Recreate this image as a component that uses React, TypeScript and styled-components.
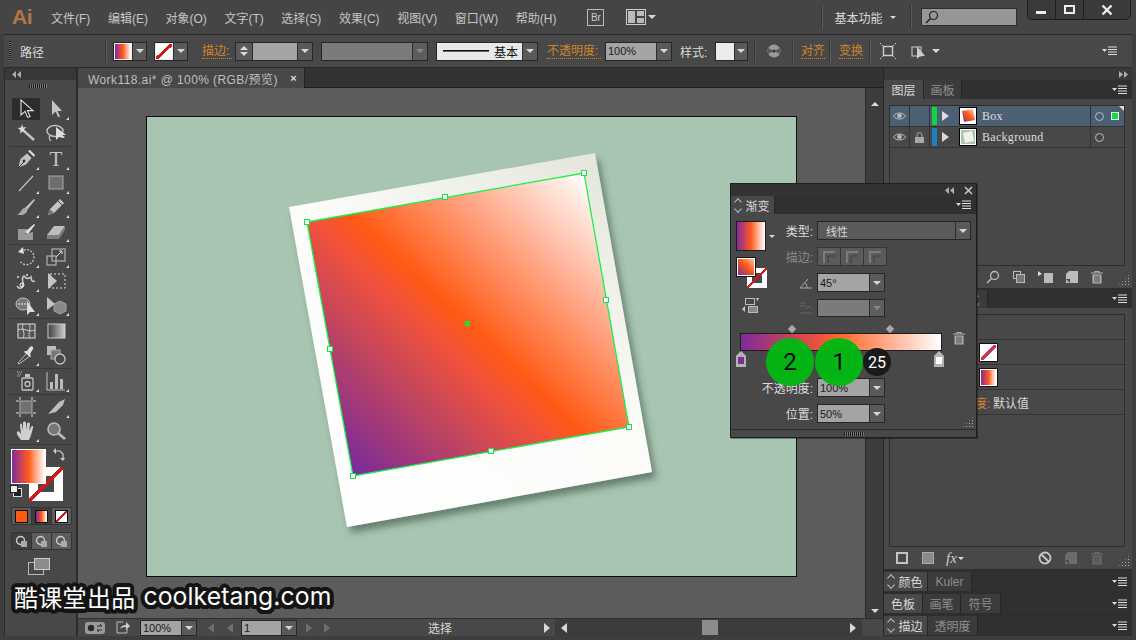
import React from 'react';
import styled, { createGlobalStyle, css } from 'styled-components';

const UI_FONT = '"Liberation Sans", "Noto Sans CJK SC", sans-serif';
const GRAD = 'linear-gradient(90deg, #7b2d9c 0%, #c0405e 25%, #f0503a 42%, #ff5a14 50%, #ffa888 72%, #ffffff 100%)';
const NONE = (c: string) => `linear-gradient(to bottom right, #fff 43%, ${c} 43%, ${c} 57%, #fff 57%)`;
const ORANGE = '#d08428';

const GlobalStyle = createGlobalStyle`
  html, body { margin: 0; padding: 0; background: #2c2c2c; }
  * { box-sizing: border-box; }
`;

const offset = css<{ $ml?: number }>`
  margin-left: ${p => p.$ml ?? 0}px;
  flex: none;
`;

const Window = styled.div`
  position: relative;
  width: 1136px;
  height: 640px;
  overflow: hidden;
  display: flex;
  flex-direction: column;
  background: #3e3e3e;
  font-family: ${UI_FONT};
  font-size: 12px;
  color: #d4d4d4;
`;

/* ---------- menu bar ---------- */
const MenuBar = styled.div`
  height: 34px;
  display: flex;
  align-items: center;
  background: #454545;
  flex: none;
`;

const Logo = styled.div`
  margin-left: 12px;
  width: 39px;
  font: bold 21px "Liberation Sans", sans-serif;
  color: #b4764a;
  letter-spacing: -0.5px;
`;

const MenuItems = styled.div`
  display: flex;
  gap: 17.6px;
  color: #c6c6c6;
`;

const BrBox = styled.div<{ $ml?: number }>`
  ${offset}
  width: 17px;
  height: 17px;
  border: 1px solid #bbb;
  font-size: 10px;
  line-height: 15px;
  text-align: center;
  color: #ccc;
`;

const Icon = styled.svg<{ $ml?: number }>`
  ${offset}
  display: block;
`;

const Caret = styled.span<{ $ml?: number; $color?: string; $size?: number }>`
  ${offset}
  display: block;
  width: 0;
  height: 0;
  border-left: ${p => p.$size ?? 4}px solid transparent;
  border-right: ${p => p.$size ?? 4}px solid transparent;
  border-top: ${p => p.$size ?? 4}px solid ${p => p.$color ?? '#d8d8d8'};
`;

const BarSep = styled.div<{ $ml?: number; $h?: number }>`
  ${offset}
  width: 1px;
  height: ${p => p.$h ?? 24}px;
  background: #5a5a5a;
  box-shadow: -1px 0 0 #383838;
`;

const Label = styled.div<{ $ml?: number; $w?: number; $accent?: boolean }>`
  ${offset}
  width: ${p => (p.$w ? `${p.$w}px` : 'auto')};
  white-space: nowrap;
  color: ${p => (p.$accent ? ORANGE : '#d8d8d8')};
  ${p => p.$accent && `border-bottom: 1px dotted ${ORANGE}; line-height: 14px;`}
`;

const SearchField = styled.div<{ $ml?: number }>`
  ${offset}
  width: 96px;
  height: 18px;
  background: #969696;
  border: 1px solid #2e2e2e;
  padding: 1px 3px;
`;

const WindowButtons = styled.div<{ $ml?: number }>`
  ${offset}
  align-self: flex-start;
  display: flex;
  height: 20px;
  background: #3a3a3a;
  border: 1px solid #1f1f1f;
  border-top: none;
  border-radius: 0 0 5px 5px;
`;

const WinBtn = styled.div<{ $w: number }>`
  width: ${p => p.$w}px;
  display: flex;
  align-items: center;
  justify-content: center;
  color: #eee;
  & + & { border-left: 1px solid #1f1f1f; }
`;

/* ---------- control bar ---------- */
const ControlBar = styled.div`
  height: 34px;
  margin: 0 4px;
  display: flex;
  align-items: center;
  background: #484848;
  border-top: 1px solid #2a2a2a;
  border-bottom: 1px solid #2a2a2a;
  flex: none;
`;

const Grip = styled.div<{ $ml?: number }>`
  ${offset}
  width: 2px;
  height: 20px;
  background: repeating-linear-gradient(180deg, #1e1e1e 0 1px, #6a6a6a 1px 2px);
`;

const Combo = styled.div<{ $ml?: number; $w: number; $h?: number }>`
  ${offset}
  width: ${p => p.$w}px;
  height: ${p => p.$h ?? 19}px;
  display: flex;
  border: 1px solid #262626;
  background: #5a5a5a;
`;

const ComboField = styled.div<{ $tone?: 'plain' | 'dim' | 'white' | 'dark' }>`
  flex: 1;
  min-width: 0;
  display: flex;
  align-items: center;
  padding: 0 2px;
  font-size: 11px;
  white-space: nowrap;
  color: ${p => (p.$tone === 'dark' ? '#d6d6d6' : '#1b1b1b')};
  background: ${p =>
    p.$tone === 'dim' ? '#7b7b7b' : p.$tone === 'white' ? '#e9e9e9' : p.$tone === 'dark' ? '#5a5a5a' : '#a4a4a4'};
`;

const ComboArrow = styled.div<{ $w?: number; $off?: boolean }>`
  width: ${p => p.$w ?? 15}px;
  flex: none;
  display: flex;
  align-items: center;
  justify-content: center;
  background: ${p => (p.$off ? '#5e5e5e' : '#5a5a5a')};
  border-left: 1px solid #2e2e2e;
  span { opacity: ${p => (p.$off ? 0.35 : 1)}; }
`;

const Spinner = styled.div<{ $ml?: number }>`
  ${offset}
  width: 17px;
  height: 19px;
  background: #5a5a5a;
  border: 1px solid #262626;
  border-right: none;
  display: flex;
  flex-direction: column;
  align-items: center;
  justify-content: space-around;
  padding: 2px 0;
`;

const UpCaret = styled.span`
  display: block;
  width: 0;
  height: 0;
  border-left: 4px solid transparent;
  border-right: 4px solid transparent;
  border-bottom: 4px solid #ddd;
`;

const GradFill = styled.div`
  width: 18px;
  flex: none;
  background: ${GRAD};
  border: 1px solid #eee;
`;

const NoneFill = styled.div`
  width: 18px;
  flex: none;
  border: 1px solid #eee;
  background: ${NONE('#cf1a1a')};
`;

const SwatchFill = styled.div`
  width: 18px;
  flex: none;
  background: #ececec;
`;

const MenuSpacer = styled.div`
  margin-left: auto;
  margin-right: 14px;
`;

/* ---------- workspace ---------- */
const Workspace = styled.div`
  flex: 1;
  min-height: 0;
  display: flex;
  padding: 0 4px 4px;
`;

const ToolColumn = styled.div`
  width: 74px;
  flex: none;
  background: #484848;
  border-right: 2px solid #2c2c2c;
  border-left: 1px solid #2c2c2c;
  display: flex;
  flex-direction: column;
`;

const CollapseStrip = styled.div<{ $right?: boolean }>`
  height: 12px;
  flex: none;
  background: #383838;
  display: flex;
  align-items: center;
  justify-content: ${p => (p.$right ? 'flex-end' : 'flex-start')};
  padding: 0 4px;
`;

const ToolGrip = styled.div`
  width: 18px;
  height: 4px;
  margin: 4px 0 9px 24px;
  background: repeating-linear-gradient(90deg, #1c1c1c 0 1px, #777 1px 2px);
`;

const ToolGroup = styled.div`
  display: grid;
  grid-template-columns: 30px 30px;
  grid-auto-rows: 24px;
  margin-left: 6px;
`;

const ToolRule = styled.div`
  height: 1px;
  margin: 1px 5px 0 4px;
  background: #383838;
`;

const Tool = styled.div<{ $active?: boolean; $more?: boolean }>`
  position: relative;
  display: flex;
  align-items: center;
  justify-content: center;
  margin: 1px;
  background: ${p => (p.$active ? '#2c2c2c' : 'transparent')};
  border-radius: 2px;
  ${p =>
    p.$more &&
    `&::after {
      content: '';
      position: absolute;
      right: 1px;
      bottom: 0;
      border-left: 3px solid transparent;
      border-bottom: 3px solid #ddd;
    }`}
`;

const ColorWell = styled.div`
  position: relative;
  height: 58px;
  margin-top: 4px;
`;

const WellFill = styled.div`
  position: absolute;
  left: 6px;
  top: 0;
  width: 35px;
  height: 35px;
  border: 1px solid #fff;
  background: ${GRAD};
  z-index: 1;
`;

const NoneStroke = styled.div<{ $size: number }>`
  position: relative;
  width: ${p => p.$size}px;
  height: ${p => p.$size}px;
  background: #fff;
  &::before {
    content: '';
    position: absolute;
    inset: 27%;
    background: #484848;
  }
  &::after {
    content: '';
    position: absolute;
    inset: 0;
    background: linear-gradient(to bottom right, transparent 47%, #d01818 47%, #d01818 53%, transparent 53%);
  }
`;

const WellStroke = styled.div`
  position: absolute;
  left: 24px;
  top: 18px;
`;

const WellSwap = styled.div`
  position: absolute;
  left: 48px;
  top: -1px;
`;

const WellDefault = styled.div`
  position: absolute;
  left: 5px;
  top: 36px;
`;

const ModeStrip = styled.div<{ $mt: number }>`
  display: flex;
  width: 61px;
  height: 18px;
  margin: ${p => p.$mt}px 0 0 6px;
  background: #3e3e3e;
  border: 1px solid #343434;
`;

const ModeCell = styled.div<{ $on?: boolean }>`
  flex: 1;
  display: flex;
  align-items: center;
  justify-content: center;
  background: ${p => (p.$on ? '#5c5c5c' : 'transparent')};
  & + & { border-left: 1px solid #343434; }
`;

const ModeChip = styled.div<{ $bg: string }>`
  width: 13px;
  height: 13px;
  border: 1px solid #111;
  background: ${p => p.$bg};
`;

const ScreenMode = styled.div`
  margin: 8px 0 0 23px;
`;

/* ---------- document ---------- */
const DocColumn = styled.div`
  flex: 1;
  min-width: 0;
  display: flex;
  flex-direction: column;
`;

const TabStrip = styled.div`
  height: 20px;
  flex: none;
  background: #333;
  border-bottom: 1px solid #1e1e1e;
`;

const DocTab = styled.div`
  width: 227px;
  height: 20px;
  padding-left: 10px;
  display: flex;
  align-items: center;
  justify-content: space-between;
  background: #484848;
  border-right: 1px solid #232323;
  color: #b8c0c0;
  white-space: nowrap;
  letter-spacing: 0.42px;
`;

const TabClose = styled.span`
  margin-right: 7px;
  color: #ddd;
  font-size: 11px;
  font-weight: bold;
`;

const CanvasRow = styled.div`
  flex: 1;
  min-height: 0;
  display: flex;
`;

const Canvas = styled.div`
  flex: 1;
  min-width: 0;
  padding: 28px 0 0 68px;
  background: #5c5c5c;
`;

const Artboard = styled.div`
  width: 651px;
  height: 461px;
  background: #a8c5b1;
  border: 1px solid #0c0c0c;
`;

const VScroll = styled.div`
  width: 18px;
  flex: none;
  background: #3c3c3c;
  border-left: 1px solid #2a2a2a;
  display: flex;
  flex-direction: column;
  align-items: center;
  justify-content: space-between;
  padding: 14px 0 5px;
`;

const StatusBar = styled.div`
  height: 18px;
  flex: none;
  display: flex;
  align-items: center;
  background: #484848;
  border-top: 1px solid #2e2e2e;
`;

const NavTri = styled.span<{ $ml?: number; $dir: 'l' | 'r'; $dim?: boolean }>`
  ${offset}
  display: block;
  width: 0;
  height: 0;
  border-top: 5px solid transparent;
  border-bottom: 5px solid transparent;
  ${p =>
    p.$dir === 'l'
      ? `border-right: 6px solid ${p.$dim ? '#6e6e6e' : '#d8d8d8'};`
      : `border-left: 6px solid ${p.$dim ? '#6e6e6e' : '#d8d8d8'};`}
`;

const HScroll = styled.div<{ $ml?: number }>`
  ${offset}
  width: 307px;
  height: 17px;
  background: #3c3c3c;
  display: flex;
  align-items: center;
  padding: 0 6px;
`;

const HThumb = styled.div<{ $ml: number }>`
  margin-left: ${p => p.$ml}px;
  margin-right: auto;
  width: 16px;
  height: 15px;
  background: #8c8c8c;
`;

/* ---------- dock ---------- */
const Dock = styled.div`
  width: 249px;
  flex: none;
  display: flex;
  flex-direction: column;
  background: #2e2e2e;
  border-left: 1px solid #262626;
`;

const Panel = styled.div<{ $h: number; $mb?: number }>`
  height: ${p => p.$h}px;
  margin-bottom: ${p => p.$mb ?? 0}px;
  flex: none;
  display: flex;
  flex-direction: column;
  background: #484848;
`;

const TabBar = styled.div<{ $h?: number }>`
  height: ${p => p.$h ?? 19}px;
  flex: none;
  display: flex;
  align-items: stretch;
  background: #303030;
  padding-right: 4px;
`;

const PanelTab = styled.div<{ $active?: boolean; $w?: number }>`
  width: ${p => (p.$w ? `${p.$w}px` : 'auto')};
  display: flex;
  align-items: center;
  justify-content: center;
  gap: 3px;
  background: ${p => (p.$active ? '#484848' : '#3b3b3b')};
  color: ${p => (p.$active ? '#d8d8d8' : '#8e8e8e')};
  border-right: 1px solid #262626;
  white-space: nowrap;
`;

const TabMenu = styled.div`
  margin-left: auto;
  display: flex;
  align-items: center;
`;

const ListBox = styled.div`
  flex: 1;
  min-height: 0;
  margin: 6px 7px 0 5px;
  border: 1px solid #2e2e2e;
`;

const LayerRow = styled.div<{ $selected?: boolean }>`
  position: relative;
  height: 21px;
  display: flex;
  align-items: stretch;
  background: ${p => (p.$selected ? '#4c6074' : 'transparent')};
  border-bottom: 1px solid #333;
  ${p =>
    p.$selected &&
    `&::after {
      content: '';
      position: absolute;
      right: 0;
      top: 0;
      border-left: 5px solid transparent;
      border-top: 5px solid #ddd;
    }`}
`;

const LayerCell = styled.div<{ $w: number }>`
  width: ${p => p.$w}px;
  flex: none;
  display: flex;
  align-items: center;
  justify-content: center;
  border-right: 1px solid #333;
`;

const ArrowCell = styled(LayerCell)`
  border-right: none;
`;

const LayerColor = styled.div<{ $c: string }>`
  width: 5px;
  flex: none;
  margin: 1px 0 1px 2px;
  background: ${p => p.$c};
`;

const Thumb = styled.div`
  width: 18px;
  height: 18px;
  margin: auto 0 auto 5px;
  border: 1px solid #000;
  outline: 1px solid #fff;
  outline-offset: -2px;
  overflow: hidden;
  flex: none;
`;

const LayerName = styled.div`
  width: 109px;
  margin-left: 5px;
  flex: none;
  display: flex;
  align-items: center;
  font: 12px "Liberation Serif", serif;
  letter-spacing: 0.3px;
  color: #dcdcdc;
  border-right: 1px solid #333;
`;

const TargetCell = styled.div`
  flex: 1;
  display: flex;
  align-items: center;
  padding-left: 4px;
  gap: 7px;
`;

const Target = styled.div`
  width: 9px;
  height: 9px;
  border: 1px solid #bcbcbc;
  border-radius: 50%;
`;

const Selected = styled.div`
  width: 8px;
  height: 8px;
  background: #0be13a;
  border: 1px solid #eee;
`;

const FootBar = styled.div`
  height: 22px;
  flex: none;
  display: flex;
  align-items: center;
  padding-left: 12px;
  position: relative;
`;

const FootSlot = styled.span<{ $ml: number }>`
  margin-left: ${p => p.$ml}px;
`;

const Resize = styled.div<{ $r?: number; $b?: number }>`
  position: absolute;
  right: ${p => p.$r ?? 2}px;
  bottom: ${p => p.$b ?? 2}px;
  width: 12px;
  height: 12px;
  background: radial-gradient(circle, #b0b0b0 0.8px, transparent 0.9px) 0 0 / 3px 3px;
  clip-path: polygon(100% 0, 100% 100%, 0 100%);
`;

const AppearRow = styled.div<{ $pad?: number }>`
  height: 25px;
  display: flex;
  align-items: center;
  padding-left: ${p => p.$pad ?? 4}px;
  border-bottom: 1px solid #333;
`;

const AppearSwatch = styled.div<{ $none?: boolean }>`
  width: 17px;
  height: 17px;
  border: 1px solid #fff;
  outline: 1px solid #111;
  background: ${p => (p.$none ? NONE('#c93a52') : GRAD)};
`;

const OpacityLabel = styled.div`
  width: 54px;
  color: ${ORANGE};
  white-space: nowrap;
`;

const Collapsed = styled.div<{ $mb: number }>`
  height: 19px;
  margin-bottom: ${p => p.$mb}px;
  flex: none;
  display: flex;
  background: #303030;
  padding-right: 4px;
`;

const FxLabel = styled.span`
  margin-left: 12px;
  font: italic 15px "Liberation Serif", serif;
  color: #ccc;
`;

const Updown = styled.span`
  display: inline-flex;
  flex-direction: column;
  gap: 1px;
  margin-right: 1px;
  &::before, &::after {
    content: '';
    width: 5px;
    height: 5px;
    border: 1px solid #ccc;
    border-width: 1px 0 0 1px;
    transform: rotate(45deg) scale(0.9);
  }
  &::after { transform: rotate(225deg) scale(0.9); }
`;

/* ---------- floating gradient panel ---------- */
const FloatPanel = styled.div`
  position: absolute;
  left: 730px;
  top: 183px;
  width: 247px;
  height: 255px;
  display: flex;
  flex-direction: column;
  background: #484848;
  border: 1px solid #1f1f1f;
  box-shadow: 1px 1px 0 rgba(0, 0, 0, 0.35);
`;

const FloatTitle = styled.div`
  height: 12px;
  flex: none;
  background: #333;
  display: flex;
  align-items: center;
  justify-content: flex-end;
  gap: 10px;
  padding-right: 3px;
`;

const FloatBody = styled.div`
  flex: 1;
  padding: 7px 6px 0 5px;
`;

const FloatTop = styled.div`
  display: flex;
`;

const FloatLeft = styled.div`
  width: 49px;
  flex: none;
`;

const BigSwatchRow = styled.div`
  display: flex;
  align-items: center;
  gap: 3px;
`;

const BigSwatch = styled.div`
  width: 30px;
  height: 30px;
  background: ${GRAD};
  border: 1px solid #1c1c1c;
`;

const MiniWell = styled.div`
  position: relative;
  width: 31px;
  height: 30px;
  margin: 7px 0 0 1px;
`;

const MiniFill = styled.div`
  position: absolute;
  left: 0;
  top: 0;
  width: 18px;
  height: 18px;
  z-index: 1;
  border: 1px solid #fff;
  outline: 1px solid #111;
  background: linear-gradient(45deg, #7b2d9c, #ff5a14 55%, #ffc2ac);
`;

const MiniStroke = styled.div`
  position: absolute;
  left: 10px;
  top: 10px;
`;

const ProxyIcon = styled.div`
  margin: 10px 0 0 6px;
`;

const FloatRight = styled.div`
  flex: 1;
  display: flex;
  flex-direction: column;
  gap: 7px;
`;

const FieldRow = styled.div<{ $dim?: boolean }>`
  display: flex;
  align-items: center;
  gap: 4px;
  color: ${p => (p.$dim ? '#8a8a8a' : '#dcdcdc')};
`;

const FieldLabel = styled.div<{ $w: number }>`
  width: ${p => p.$w}px;
  flex: none;
  display: flex;
  justify-content: flex-end;
  white-space: nowrap;
`;

const StrokeButtons = styled.div`
  display: flex;
  width: 70px;
  height: 19px;
  border: 1px solid #363636;
`;

const StrokeBtn = styled.div`
  flex: 1;
  display: flex;
  align-items: center;
  justify-content: center;
  background: #5a5a5a;
  & + & { border-left: 1px solid #363636; }
`;

const SliderWrap = styled.div`
  position: relative;
  height: 42px;
  margin: 10px 0 0 4px;
  width: 202px;
`;

const SliderBar = styled.div`
  position: absolute;
  left: 0;
  top: 6px;
  width: 100%;
  height: 18px;
  border: 1px solid #1c1c1c;
  background: linear-gradient(90deg, #7e2b9b 0%, #c0405e 22%, #e95040 38%, #ff6a28 50%, #ffa888 72%, #ffffff 100%);
`;

const Diamond = styled.div<{ $x: number }>`
  position: absolute;
  left: ${p => p.$x}px;
  top: -1px;
  width: 6px;
  height: 6px;
  background: #a8a8a8;
  transform: rotate(45deg);
`;

const StopMark = styled.div<{ $x: number; $c: string }>`
  position: absolute;
  left: ${p => p.$x}px;
  top: 24px;
  width: 10px;
  height: 16px;
  background: #b4b4b4;
  clip-path: polygon(50% 0, 100% 30%, 100% 100%, 0 100%, 0 30%);
  &::after {
    content: '';
    position: absolute;
    left: 2px;
    top: 6px;
    width: 6px;
    height: 7px;
    background: ${p => p.$c};
  }
`;

const SliderTrash = styled.div`
  position: absolute;
  left: 212px;
  top: 4px;
`;

const LowerFields = styled.div`
  display: flex;
  flex-direction: column;
  gap: 7px;
  margin-top: 9px;
`;

const FloatFoot = styled.div`
  height: 8px;
  flex: none;
  position: relative;
  border-top: 1px solid #2c2c2c;
  display: flex;
  justify-content: center;
  align-items: center;
`;

const FootGrip = styled.div`
  width: 20px;
  height: 4px;
  background: repeating-linear-gradient(90deg, #1c1c1c 0 1px, #777 1px 2px);
`;

/* ---------- overlays ---------- */
const Badge = styled.div<{ $x: number; $r: number; $dark?: boolean }>`
  position: absolute;
  left: ${p => p.$x - p.$r}px;
  top: 362px;
  margin-top: -${p => p.$r}px;
  width: ${p => p.$r * 2}px;
  height: ${p => p.$r * 2}px;
  border-radius: 50%;
  display: flex;
  align-items: center;
  justify-content: center;
  font-family: Roboto, sans-serif;
  font-size: ${p => (p.$dark ? 16 : 24)}px;
  color: ${p => (p.$dark ? '#fff' : '#0a0a0a')};
  background: ${p => (p.$dark ? '#1a1a1a' : 'rgba(0, 184, 18, 0.96)')};
`;

const outline = (() => {
  const parts: string[] = [];
  for (let i = 0; i < 24; i++) {
    const a = (i / 24) * Math.PI * 2;
    parts.push(`${(Math.cos(a) * 4).toFixed(1)}px ${(Math.sin(a) * 4).toFixed(1)}px 0 #141414`);
  }
  return parts.join(', ');
})();

const Watermark = styled.div`
  position: absolute;
  left: 14px;
  top: 579px;
  height: 34px;
  display: flex;
  align-items: center;
  gap: 8px;
  color: #fff;
  white-space: nowrap;
  text-shadow: ${outline};
`;

const WatermarkCn = styled.span`
  font: 24px "Noto Sans CJK SC", sans-serif;
  letter-spacing: 0.3px;
`;

const WatermarkEn = styled.span`
  font: 24.7px Inter, sans-serif;
  letter-spacing: 0.1px;
`;

/* ---------- drawings ---------- */
const S = ({ children, w = 22, ml }: { children: React.ReactNode; w?: number; ml?: number }) => (
  <Icon $ml={ml} width={w} height={w} viewBox="0 0 22 22" fill="none">
    {children}
  </Icon>
);

const G = '#c4c4c4';

const tools: { key: string; more?: boolean; active?: boolean; draw: React.ReactNode }[][] = [
  [
    { key: 'sel', active: true, draw: <path d="M6 2v15l4-3.6 2.6 6 2.4-1-2.6-5.8H18z" fill="#242424" stroke="#e2e2e2" strokeWidth="1.1" /> },
    { key: 'direct', more: true, draw: <path d="M7 2v15l3.6-3.4 2.6 5.6 1.8-.8-2.5-5.4H17z" fill={G} /> },
    { key: 'wand', draw: <><path d="M9 9l10 9" stroke={G} strokeWidth="2.4" /><path d="M7 2l1 3.4L11.4 5 9 7.6l1.6 3L7.4 9.4 5 11.4l.4-3.4L2.6 6l3.4-.6z" fill="#ddd" /></> },
    { key: 'lasso', draw: <><ellipse cx="10" cy="9" rx="8" ry="5.5" stroke={G} strokeWidth="1.4" /><path d="M11 5v13l3-3 4 1 2-1-3-2h4z" fill="#ddd" /><path d="M5 14c-2 2 0 4 1 5" stroke={G} strokeWidth="1.2" /></> },
  ],
  [
    { key: 'pen', more: true, draw: <><path d="M3 20l2-9 7-6 5 5-6 7z" fill={G} stroke="#333" strokeWidth=".6" /><path d="M3 20l6-6" stroke="#333" /><circle cx="9" cy="13" r="1.4" fill="#333" /><path d="M13 3l6 6 1-2-5-5z" fill="#ddd" /></> },
    { key: 'type', more: true, draw: <text x="11" y="18" textAnchor="middle" fontFamily="Liberation Serif" fontSize="21" fill={G}>T</text> },
    { key: 'line', more: true, draw: <path d="M4 19L18 4" stroke={G} strokeWidth="1.2" /> },
    { key: 'rect', more: true, draw: <rect x="4" y="4" width="14" height="13" fill="#6e6e6e" stroke="#aaa" /> },
    { key: 'brush', more: true, draw: <><path d="M10 12L19 3l1 1-8 10z" fill={G} /><path d="M2 18c4 0 4-6 8-6 3 0 3 3 1 5s-6 3-9 1z" fill="#aaa" /></> },
    { key: 'pencil', more: true, draw: <><path d="M3 19l2-6L15 3l4 4L9 17z" fill={G} /><path d="M3 19l2-6 4 4z" fill="#777" /><path d="M13 5l4 4" stroke="#444" /></> },
    { key: 'blob', draw: <><path d="M3 9h10l-3 5 8-2v8H3z" fill="#999" /><path d="M10 12l9-8 1 1-7 9z" fill="#ddd" /></> },
    { key: 'eraser', more: true, draw: <><path d="M2 15l7-9h11l-6 9z" fill="#bdbdbd" /><path d="M2 15h12v4H2zM14 15l6-9v4l-6 9z" fill="#7e7e7e" /></> },
  ],
  [
    { key: 'rotate', more: true, draw: <><path d="M6 6a7.5 7.5 0 1 1-1 9" stroke={G} strokeWidth="1.3" strokeDasharray="2 1.4" /><path d="M8 1L3 6l6 2z" fill="#ddd" /></> },
    { key: 'scale', more: true, draw: <><rect x="2" y="10" width="9" height="9" stroke={G} /><rect x="7" y="3" width="13" height="12" stroke={G} /><path d="M11 11l6-6m-3 0h3v3" stroke="#ddd" /></> },
    { key: 'warp', more: true, draw: <><path d="M2 16c3 4 6 2 6-2S6 7 9 6c2 3 5 3 7 1 0 4 2 5 4 4" stroke={G} strokeWidth="1.6" /><circle cx="7" cy="15" r="2" stroke="#fff" /><circle cx="3" cy="7" r="1" fill="#ddd" /><circle cx="12" cy="5" r="1" fill="#ddd" /></> },
    { key: 'free', draw: <><rect x="5" y="4" width="15" height="14" stroke="#ddd" strokeDasharray="2 2" /><path d="M3 3v16l9-8z" fill={G} /></> },
    { key: 'shape', more: true, draw: <><ellipse cx="8" cy="10" rx="7" ry="6" fill="#777" stroke={G} /><path d="M3 10h10" stroke="#eee" strokeDasharray="2 1" /><path d="M12 7v14l3-3h5z" fill="#ddd" /></> },
    { key: 'persp', more: true, draw: <><path d="M2 3v13l8-6z" fill={G} /><path d="M9 10l6-3 6 3v7l-6 3-6-3z" fill="#888" stroke="#bbb" strokeWidth=".7" /></> },
  ],
  [
    { key: 'mesh', draw: <><rect x="3" y="4" width="17" height="14" stroke="#ddd" fill="#555" /><path d="M3 10c5-3 11 3 17 0M8 4c-2 5 3 9 0 14M14 4c3 4-2 9 1 14" stroke="#e4e4e4" strokeWidth=".8" /></> },
    { key: 'grad', draw: <><defs><linearGradient id="toolgrad"><stop offset="0" stopColor="#3e3e3e" /><stop offset="1" stopColor="#cfcfcf" /></linearGradient></defs><rect x="3" y="4" width="17" height="14" fill="url(#toolgrad)" stroke="#ccc" /></> },
    { key: 'drop', more: true, draw: <><path d="M4 20l-1-1 9-10 3 3z" fill="#444" stroke="#ddd" strokeWidth=".8" /><path d="M12 7l3-4c2-2 4 0 3 2l-3 5 1 2-1 1-6-5 1-1z" fill="#ddd" /></> },
    { key: 'blend', draw: <><rect x="2" y="2" width="9" height="9" fill="#bbb" /><rect x="6" y="6" width="9" height="9" fill="#777" stroke="#aaa" /><circle cx="15" cy="15" r="5" fill="#484848" stroke={G} strokeWidth="1.3" /></> },
  ],
  [
    { key: 'spray', more: true, draw: <><rect x="7" y="8" width="11" height="12" rx="1" fill="#444" stroke={G} strokeWidth="1.3" /><circle cx="12.5" cy="14" r="2.5" stroke={G} strokeWidth="1.3" /><rect x="10" y="4" width="5" height="3" fill={G} /><path d="M2 2h6M3 4h4M2 6h3" stroke={G} strokeDasharray="1 1" /></> },
    { key: 'graph', more: true, draw: <><path d="M2 2v18h18" stroke={G} /><path d="M5 12h3v7H5zM10 4h3v15h-3zM15 9h3v10h-3z" fill="#bbb" /></> },
  ],
  [
    { key: 'board', draw: <><rect x="5" y="5" width="12" height="12" fill="#707070" stroke="#aaa" /><path d="M1 5h3M18 5h3M1 17h3M18 17h3M5 1v3M17 1v3M5 18v3M17 18v3" stroke="#ddd" /></> },
    { key: 'slice', more: true, draw: <path d="M3 18L14 6l6-3-2 6-7 7z" fill="#bdbdbd" /> },
    { key: 'hand', more: true, draw: <path d="M6 20c-2-3-5-6-4-8s3 0 4 2l-1-9c0-2 2-2 2 0l1 6V3c0-2 3-2 3 0v7l1-6c0-2 3-2 3 0l-1 7 2-4c1-2 3-1 2 1-1 4-2 8-4 12z" fill="#cfcfcf" /> },
    { key: 'zoom', draw: <><circle cx="9" cy="9" r="6" fill="#777" stroke="#bbb" strokeWidth="1.6" /><path d="M13 13l7 6" stroke="#bbb" strokeWidth="2.6" /></> },
  ],
];

const Chevrons = ({ dir, ml }: { dir: 'l' | 'r'; ml?: number }) => (
  <Icon $ml={ml} width={9} height={7} viewBox="0 0 9 7">
    <path d={dir === 'l' ? 'M4 0v7L0 3.5zM9 0v7L5 3.5z' : 'M0 0v7l4-3.5zM5 0v7l4-3.5z'} fill="#aeaeae" />
  </Icon>
);

const Trash = ({ c = '#b0b0b0', w = 14 }: { c?: string; w?: number }) => (
  <Icon width={w} height={w} viewBox="0 0 14 14" fill="none">
    <path d="M1 3h12M5 3V1.5h4V3" stroke={c} strokeWidth="1.2" />
    <path d="M2.5 4.5h9v9h-9z" fill={c} />
    <path d="M5 5.5v7M7 5.5v7M9 5.5v7" stroke="#484848" />
  </Icon>
);

const PanelMenuIcon = () => (
  <Icon width={16} height={10} viewBox="0 0 16 10">
    <path d="M0 3h5L2.5 6z" fill="#ddd" />
    <path d="M6 1h9M6 3.5h9M6 6h9M6 8.5h9" stroke="#ddd" />
  </Icon>
);

const Eye = () => (
  <Icon width={13} height={10} viewBox="0 0 13 10" fill="none">
    <path d="M.5 5C3 1 10 1 12.5 5 10 9 3 9 .5 5z" stroke="#bdbdbd" />
    <circle cx="6.5" cy="4.8" r="2.3" fill="#bdbdbd" />
  </Icon>
);

const Arrow = () => (
  <Icon width={7} height={10} viewBox="0 0 7 10">
    <path d="M0 0l7 5-7 5z" fill="#dcdcdc" />
  </Icon>
);

const NewLayerIcon = ({ c = '#bdbdbd' }: { c?: string }) => (
  <Icon width={12} height={12} viewBox="0 0 12 12">
    <path d="M3 0h9v12H0V3z" fill={c} />
    <path d="M0 8l4 0v4z" fill="#484848" />
  </Icon>
);

const Artwork = () => (
  <Icon width={649} height={459} viewBox="147 117 649 459">
    <defs>
      <linearGradient id="paper" gradientUnits="userSpaceOnUse" x1="350" y1="520" x2="600" y2="160">
        <stop offset="0" stopColor="#ffffff" />
        <stop offset="0.55" stopColor="#fbfbf8" />
        <stop offset="1" stopColor="#e4e6da" />
      </linearGradient>
      <linearGradient id="fillgrad" gradientUnits="userSpaceOnUse" x1="338" y1="461" x2="596" y2="185">
        <stop offset="0" stopColor="#782a9c" />
        <stop offset="0.25" stopColor="#bf4460" />
        <stop offset="0.42" stopColor="#f2523a" />
        <stop offset="0.5" stopColor="#ff5a14" />
        <stop offset="0.75" stopColor="#ffa98a" />
        <stop offset="1" stopColor="#ffffff" />
      </linearGradient>
      <filter id="drop" x="-10%" y="-10%" width="125%" height="125%">
        <feDropShadow dx="4" dy="6" stdDeviation="3.5" floodColor="#2f4a3a" floodOpacity="0.55" />
      </filter>
    </defs>
    <polygon points="289,207 595,153 652,472 347,527" fill="url(#paper)" filter="url(#drop)" />
    <polygon points="307,222 584,173 629,427 353,476" fill="url(#fillgrad)" stroke="#18f050" strokeWidth="1.3" />
    {[
      [307, 222], [445, 197], [584, 173], [606, 300], [629, 427], [491, 451], [353, 476], [330, 349],
    ].map(([x, y]) => (
      <rect key={`${x}-${y}`} x={x - 2.5} y={y - 2.5} width="5" height="5" fill="#fff" stroke="#18e04c" />
    ))}
    <rect x="465" y="321" width="5" height="5" fill="#14e63e" />
  </Icon>
);

const Thumbnail = ({ variant }: { variant: 'box' | 'bg' }) =>
  variant === 'box' ? (
    <Icon width={16} height={16} viewBox="0 0 16 16">
      <rect width="16" height="16" fill="#fff" />
      <polygon points="2,3 13,1 15,12 4,14" fill="url(#fillthumb)" />
      <defs>
        <linearGradient id="fillthumb" x1="0" y1="1" x2="1" y2="0">
          <stop offset="0" stopColor="#7b2d9c" />
          <stop offset=".5" stopColor="#ff5a14" />
          <stop offset="1" stopColor="#ffd8c8" />
        </linearGradient>
      </defs>
    </Icon>
  ) : (
    <Icon width={16} height={16} viewBox="0 0 16 16">
      <rect width="16" height="16" fill="#a8c5b1" />
      <polygon points="3,4 12,2 14,12 5,14" fill="#f0f2ea" />
    </Icon>
  );

const menus = ['文件(F)', '编辑(E)', '对象(O)', '文字(T)', '选择(S)', '效果(C)', '视图(V)', '窗口(W)', '帮助(H)'];

const DropDown = ({ ml, w, value, tone, off, h }: { ml?: number; w: number; value?: string; tone?: 'plain' | 'dim' | 'white' | 'dark'; off?: boolean; h?: number }) => (
  <Combo $ml={ml} $w={w} $h={h}>
    <ComboField $tone={tone}>{value}</ComboField>
    <ComboArrow $off={off}>
      <Caret />
    </ComboArrow>
  </Combo>
);

const StrokeStyleLabel = styled(Label)`
  color: #111;
  font-size: 12px;
`;

const App: React.FC = () => {
  return (
    <>
      <GlobalStyle />
      <Window>
        <MenuBar>
          <Logo>Ai</Logo>
          <MenuItems>
            {menus.map(m => (
              <span key={m}>{m}</span>
            ))}
          </MenuItems>
          <BrBox $ml={31}>Br</BrBox>
          <Icon $ml={22} width={20} height={16} viewBox="0 0 20 16">
            <rect x=".5" y=".5" width="19" height="15" fill="#444" stroke="#ccc" />
            <rect x="2" y="2" width="7" height="12" fill="#bbb" />
            <rect x="11" y="2" width="7" height="5" fill="#bbb" />
            <rect x="11" y="9" width="7" height="5" fill="#bbb" />
          </Icon>
          <Caret $ml={2} />
          <BarSep $ml={166} />
          <Label $ml={11} $w={48}>基本功能</Label>
          <Caret $ml={8} $size={3} />
          <BarSep $ml={15} />
          <SearchField $ml={9}>
            <Icon width={14} height={14} viewBox="0 0 14 14" fill="none">
              <circle cx="8.5" cy="5.5" r="4" stroke="#222" strokeWidth="1.2" />
              <path d="M5.5 8.5L1 13" stroke="#222" strokeWidth="1.6" />
            </Icon>
          </SearchField>
          <WindowButtons $ml={10}>
            <WinBtn $w={27}>
              <Icon width={11} height={11} viewBox="0 0 11 11"><rect y="7" width="10" height="3" fill="#eee" /></Icon>
            </WinBtn>
            <WinBtn $w={28}>
              <Icon width={11} height={11} viewBox="0 0 11 11" fill="none"><rect x="1" y="2" width="9" height="7" stroke="#eee" strokeWidth="2" /></Icon>
            </WinBtn>
            <WinBtn $w={47}>
              <Icon width={12} height={12} viewBox="0 0 12 12"><path d="M1.5 1.5l9 9m0-9l-9 9" stroke="#eee" strokeWidth="2.4" /></Icon>
            </WinBtn>
          </WindowButtons>
        </MenuBar>

        <ControlBar>
          <Grip $ml={5} />
          <Label $ml={9} $w={24}>路径</Label>
          <BarSep $ml={62} />
          <Combo $ml={6} $w={34}><GradFill /><ComboArrow $w={14}><Caret /></ComboArrow></Combo>
          <Combo $ml={7} $w={34}><NoneFill /><ComboArrow $w={14}><Caret /></ComboArrow></Combo>
          <Label $ml={14} $w={30} $accent>描边:</Label>
          <Spinner $ml={3}><UpCaret /><Caret /></Spinner>
          <DropDown w={61} />
          <DropDown ml={8} w={107} tone="dim" off />
          <Combo $ml={8} $w={102}>
            <ComboField $tone="white">
              <Icon $ml={4} width={46} height={4} viewBox="0 0 46 4"><rect y="1" width="46" height="1.6" fill="#111" /></Icon>
              <StrokeStyleLabel $ml={5}>基本</StrokeStyleLabel>
            </ComboField>
            <ComboArrow><Caret /></ComboArrow>
          </Combo>
          <Label $ml={9} $w={54} $accent>不透明度:</Label>
          <DropDown ml={4} w={67} value="100%" />
          <Label $ml={8} $w={30}>样式:</Label>
          <Combo $ml={5} $w={33}><SwatchFill /><ComboArrow $w={13}><Caret /></ComboArrow></Combo>
          <BarSep $ml={7} />
          <Icon $ml={11} width={14} height={14} viewBox="0 0 14 14">
            <circle cx="7" cy="7" r="6.5" fill="#9a9a9a" />
            <path d="M7 7L1 4v6zM7 7l6-3v6z" fill="#5a5a5a" />
            <circle cx="7" cy="7" r="1.5" fill="#333" />
          </Icon>
          <BarSep $ml={12} />
          <Label $ml={7} $w={24} $accent>对齐</Label>
          <BarSep $ml={5} />
          <Label $ml={8} $w={24} $accent>变换</Label>
          <BarSep $ml={7} />
          <Icon $ml={9} width={16} height={16} viewBox="0 0 16 16" fill="none">
            <rect x="3.5" y="3.5" width="9" height="9" stroke="#cfcfcf" strokeWidth="1.4" />
            <path d="M0 0l3 3m13-3l-3 3M0 16l3-3m13 3l-3-3" stroke="#cfcfcf" strokeDasharray="1.5 1" />
          </Icon>
          <Icon $ml={15} width={16} height={17} viewBox="0 0 16 17" fill="none">
            <rect x="1" y="4" width="9" height="9" stroke="#bbb" strokeWidth="1.2" />
            <path d="M6 3v13l3-3h5z" fill="#ccc" />
          </Icon>
          <Caret $ml={5} />
          <MenuSpacer><PanelMenuIcon /></MenuSpacer>
        </ControlBar>

        <Workspace>
          <ToolColumn>
            <CollapseStrip><Chevrons dir="l" ml={3} /></CollapseStrip>
            <ToolGrip />
            {tools.map((group, i) => (
              <React.Fragment key={i}>
                {i > 0 && <ToolRule />}
                <ToolGroup>
                  {group.map(t => (
                    <Tool key={t.key} $active={t.active} $more={t.more}>
                      <S>{t.draw}</S>
                    </Tool>
                  ))}
                </ToolGroup>
              </React.Fragment>
            ))}
            <ToolRule />
            <ColorWell>
              <WellFill />
              <WellStroke><NoneStroke $size={34} /></WellStroke>
              <WellSwap>
                <Icon width={12} height={14} viewBox="0 0 12 14" fill="none">
                  <path d="M1 3h6l3 3v5" stroke="#ccc" strokeWidth="1.2" />
                  <path d="M3 0L0 3l3 3zM7 10l3 3 2-3z" fill="#ccc" />
                </Icon>
              </WellSwap>
              <WellDefault>
                <Icon width={12} height={12} viewBox="0 0 12 12">
                  <rect x="3.5" y="3.5" width="8" height="8" fill="#222" stroke="#ddd" />
                  <rect x=".5" y=".5" width="7" height="7" fill="#eee" stroke="#222" />
                </Icon>
              </WellDefault>
            </ColorWell>
            <ModeStrip $mt={0}>
              <ModeCell $on><ModeChip $bg="#ff5a14" /></ModeCell>
              <ModeCell><ModeChip $bg={GRAD} /></ModeCell>
              <ModeCell $on><ModeChip $bg={NONE('#d01818')} /></ModeCell>
            </ModeStrip>
            <ModeStrip $mt={7}>
              {[0, 1, 2].map(i => (
                <ModeCell key={i} $on={i > 0}>
                  <Icon width={13} height={13} viewBox="0 0 13 13" fill="none">
                    <circle cx="5.5" cy="5.5" r="4" stroke="#ccc" strokeWidth="1.4" />
                    <rect x="6" y="6" width="6" height="6" fill="#aaa" />
                  </Icon>
                </ModeCell>
              ))}
            </ModeStrip>
            <ScreenMode>
              <Icon width={22} height={17} viewBox="0 0 22 17" fill="none">
                <rect x=".5" y="4.5" width="15" height="12" stroke="#bbb" />
                <rect x="6.5" y=".5" width="15" height="11" fill="#8c8c8c" stroke="#ccc" />
              </Icon>
            </ScreenMode>
          </ToolColumn>

          <DocColumn>
            <TabStrip>
              <DocTab>
                <span>Work118.ai* @ 100% (RGB/预览)</span>
                <TabClose>×</TabClose>
              </DocTab>
            </TabStrip>
            <CanvasRow>
              <Canvas>
                <Artboard>
                  <Artwork />
                </Artboard>
              </Canvas>
              <VScroll>
                <UpCaret />
                <Caret />
              </VScroll>
            </CanvasRow>
            <StatusBar>
              <Icon $ml={7} width={20} height={12} viewBox="0 0 20 12">
                <rect width="20" height="12" rx="3" fill="#9a9a9a" />
                <circle cx="6" cy="6" r="3.2" fill="#2a2a2a" />
                <path d="M12 4h5l-2-2M17 8h-5l2 2" stroke="#2a2a2a" fill="none" />
              </Icon>
              <Icon $ml={11} width={14} height={13} viewBox="0 0 14 13" fill="none">
                <path d="M7 1H1v11h10V8" stroke="#bbb" />
                <path d="M4 8c1-3 3-4 6-4V1l4 4-4 4V6c-2 0-4 0-6 2z" fill="#ccc" />
              </Icon>
              <DropDown ml={10} w={57} value="100%" h={16} />
              <NavTri $ml={11} $dir="l" $dim />
              <NavTri $ml={13} $dir="l" $dim />
              <DropDown ml={8} w={56} value="1" h={16} />
              <NavTri $ml={9} $dir="r" $dim />
              <NavTri $ml={12} $dir="r" $dim />
              <Label $ml={98} $w={24}>选择</Label>
              <NavTri $ml={92} $dir="r" />
              <HScroll $ml={5}>
                <NavTri $dir="l" />
                <HThumb $ml={135} />
                <NavTri $dir="r" />
              </HScroll>
            </StatusBar>
          </DocColumn>

          <Dock>
            <CollapseStrip $right><Chevrons dir="r" /></CollapseStrip>
            <Panel $h={208} $mb={2}>
              <TabBar>
                <PanelTab $active $w={40}>图层</PanelTab>
                <PanelTab $w={38}>画板</PanelTab>
                <TabMenu><PanelMenuIcon /></TabMenu>
              </TabBar>
              <ListBox>
                <LayerRow $selected>
                  <LayerCell $w={20}><Eye /></LayerCell>
                  <LayerCell $w={20} />
                  <LayerColor $c="#12d43e" />
                  <ArrowCell $w={17}><Arrow /></ArrowCell>
                  <Thumb><Thumbnail variant="box" /></Thumb>
                  <LayerName>Box</LayerName>
                  <TargetCell><Target /><Selected /></TargetCell>
                </LayerRow>
                <LayerRow>
                  <LayerCell $w={20}><Eye /></LayerCell>
                  <LayerCell $w={20}>
                    <Icon width={9} height={11} viewBox="0 0 9 11" fill="none">
                      <path d="M2 5V3a2.5 2.5 0 0 1 5 0v2" stroke="#a8a8a8" />
                      <rect y="5" width="9" height="6" fill="#a8a8a8" />
                    </Icon>
                  </LayerCell>
                  <LayerColor $c="#1f7fc4" />
                  <ArrowCell $w={17}><Arrow /></ArrowCell>
                  <Thumb><Thumbnail variant="bg" /></Thumb>
                  <LayerName>Background</LayerName>
                  <TargetCell><Target /></TargetCell>
                </LayerRow>
              </ListBox>
              <FootBar>
                <Icon $ml={90} width={14} height={14} viewBox="0 0 14 14" fill="none">
                  <circle cx="8.5" cy="5.5" r="4" stroke="#bbb" strokeWidth="1.3" />
                  <path d="M5.5 8.5L1 13" stroke="#bbb" strokeWidth="1.4" />
                </Icon>
                <Icon $ml={13} width={12} height={12} viewBox="0 0 12 12" fill="none">
                  <rect x=".5" y=".5" width="7" height="7" stroke="#bbb" />
                  <rect x="3.5" y="3.5" width="8" height="8" stroke="#bbb" fill="#777" />
                </Icon>
                <Icon $ml={13} width={15} height={12} viewBox="0 0 15 12">
                  <path d="M6 2h9v10H6z" fill="#bbb" />
                  <path d="M0 0l4 3L0 5z" fill="#ddd" />
                </Icon>
                <FootSlot $ml={13}><NewLayerIcon /></FootSlot>
                <FootSlot $ml={12}><Trash /></FootSlot>
                <Resize />
              </FootBar>
            </Panel>
            <Panel $h={279} $mb={3}>
              <TabBar $h={18}>
                <PanelTab $active $w={40}>外观</PanelTab>
                <PanelTab $w={64}>图形样式</PanelTab>
                <TabMenu><PanelMenuIcon /></TabMenu>
              </TabBar>
              <ListBox>
                <AppearRow>路径</AppearRow>
                <AppearRow $pad={90}><AppearSwatch $none /></AppearRow>
                <AppearRow $pad={90}><AppearSwatch /></AppearRow>
                <AppearRow $pad={49}>
                  <OpacityLabel>不透明度:</OpacityLabel>
                  <Label>默认值</Label>
                </AppearRow>
              </ListBox>
              <FootBar>
                <Icon width={12} height={12} viewBox="0 0 12 12" fill="none"><rect x="1" y="1" width="10" height="10" stroke="#c4c4c4" strokeWidth="2" /></Icon>
                <Icon $ml={14} width={12} height={12} viewBox="0 0 12 12"><rect x=".5" y=".5" width="11" height="11" fill="#8a8a8a" stroke="#aaa" /></Icon>
                <FxLabel>fx</FxLabel>
                <Caret $ml={1} $size={3} />
                <Icon $ml={74} width={14} height={14} viewBox="0 0 14 14" fill="none">
                  <circle cx="7" cy="7" r="5.5" stroke="#c8c8c8" strokeWidth="1.8" />
                  <path d="M3 3l8 8" stroke="#c8c8c8" strokeWidth="1.8" />
                </Icon>
                <FootSlot $ml={13}><NewLayerIcon c="#6c6c6c" /></FootSlot>
                <FootSlot $ml={13}><Trash c="#6c6c6c" /></FootSlot>
                <Resize />
              </FootBar>
            </Panel>
            <Collapsed $mb={3}>
              <PanelTab $active $w={44}><Updown />颜色</PanelTab>
              <PanelTab $w={44}>Kuler</PanelTab>
              <TabMenu><PanelMenuIcon /></TabMenu>
            </Collapsed>
            <Collapsed $mb={3}>
              <PanelTab $active $w={39}>色板</PanelTab>
              <PanelTab $w={38}>画笔</PanelTab>
              <PanelTab $w={40}>符号</PanelTab>
              <TabMenu><PanelMenuIcon /></TabMenu>
            </Collapsed>
            <Collapsed $mb={0}>
              <PanelTab $active $w={44}><Updown />描边</PanelTab>
              <PanelTab $w={50}>透明度</PanelTab>
              <TabMenu><PanelMenuIcon /></TabMenu>
            </Collapsed>
          </Dock>
        </Workspace>

        <FloatPanel>
          <FloatTitle>
            <Chevrons dir="l" />
            <Icon width={9} height={9} viewBox="0 0 9 9">
              <path d="M1 1l7 7m0-7l-7 7" stroke="#c4c4c4" strokeWidth="1.6" />
            </Icon>
          </FloatTitle>
          <TabBar $h={18}>
            <PanelTab $active $w={44}><Updown />渐变</PanelTab>
            <TabMenu><PanelMenuIcon /></TabMenu>
          </TabBar>
          <FloatBody>
            <FloatTop>
              <FloatLeft>
                <BigSwatchRow>
                  <BigSwatch />
                  <Caret $size={3} />
                </BigSwatchRow>
                <MiniWell>
                  <MiniFill />
                  <MiniStroke><NoneStroke $size={20} /></MiniStroke>
                </MiniWell>
                <ProxyIcon>
                  <Icon width={17} height={15} viewBox="0 0 17 15" fill="none">
                    <rect x="3.5" y=".5" width="9" height="6" stroke="#bbb" />
                    <rect x="6.5" y="8.5" width="9" height="6" fill="#888" stroke="#bbb" />
                    <path d="M0 11l3-3v6zM14 0h3l-1.5 3z" fill="#ccc" />
                  </Icon>
                </ProxyIcon>
              </FloatLeft>
              <FloatRight>
                <FieldRow>
                  <FieldLabel $w={28}>类型:</FieldLabel>
                  <Combo $w={154}>
                    <ComboField $tone="dark">&nbsp;&nbsp;线性</ComboField>
                    <ComboArrow><Caret /></ComboArrow>
                  </Combo>
                </FieldRow>
                <FieldRow $dim>
                  <FieldLabel $w={28}>描边:</FieldLabel>
                  <StrokeButtons>
                    {[0, 1, 2].map(i => (
                      <StrokeBtn key={i}>
                        <Icon width={14} height={13} viewBox="0 0 14 13" fill="none">
                          <path d="M2 13V2h11" stroke="#7c7c7c" strokeWidth="2" />
                          <path d="M6 13V6h7" stroke="#3c3c3c" strokeWidth="1" />
                        </Icon>
                      </StrokeBtn>
                    ))}
                  </StrokeButtons>
                </FieldRow>
                <FieldRow>
                  <FieldLabel $w={28}>
                    <Icon width={14} height={12} viewBox="0 0 14 12" fill="none">
                      <path d="M13 11H1L9 2M6 6c2 1 2 3 2 5" stroke="#a8a8a8" />
                    </Icon>
                  </FieldLabel>
                  <DropDown w={68} value="45°" />
                </FieldRow>
                <FieldRow $dim>
                  <FieldLabel $w={28}>
                    <Icon width={14} height={12} viewBox="0 0 14 12" fill="none">
                      <path d="M1 1h6M1 4h6M1 11h12M7 7l3-3 3 3" stroke="#666" />
                    </Icon>
                  </FieldLabel>
                  <DropDown w={68} tone="dim" off h={18} />
                </FieldRow>
              </FloatRight>
            </FloatTop>
            <SliderWrap>
              <SliderBar />
              <Diamond $x={49} />
              <Diamond $x={147} />
              <StopMark $x={-4} $c="#7b2d9c" />
              <StopMark $x={95} $c="#ff5a14" />
              <StopMark $x={194} $c="#ffffff" />
              <SliderTrash><Trash /></SliderTrash>
            </SliderWrap>
            <LowerFields>
              <FieldRow>
                <FieldLabel $w={77}>不透明度:</FieldLabel>
                <DropDown w={68} value="100%" />
              </FieldRow>
              <FieldRow>
                <FieldLabel $w={77}>位置:</FieldLabel>
                <DropDown w={68} value="50%" />
              </FieldRow>
            </LowerFields>
          </FloatBody>
          <FloatFoot>
            <FootGrip />
          </FloatFoot>
          <Resize $r={2} $b={9} />
        </FloatPanel>

        <Badge $x={790} $r={24}>2</Badge>
        <Badge $x={839} $r={24}>1</Badge>
        <Badge $x={877} $r={14} $dark>25</Badge>

        <Watermark>
          <WatermarkCn>酷课堂出品</WatermarkCn>
          <WatermarkEn>coolketang.com</WatermarkEn>
        </Watermark>
      </Window>
    </>
  );
};

export default App;
